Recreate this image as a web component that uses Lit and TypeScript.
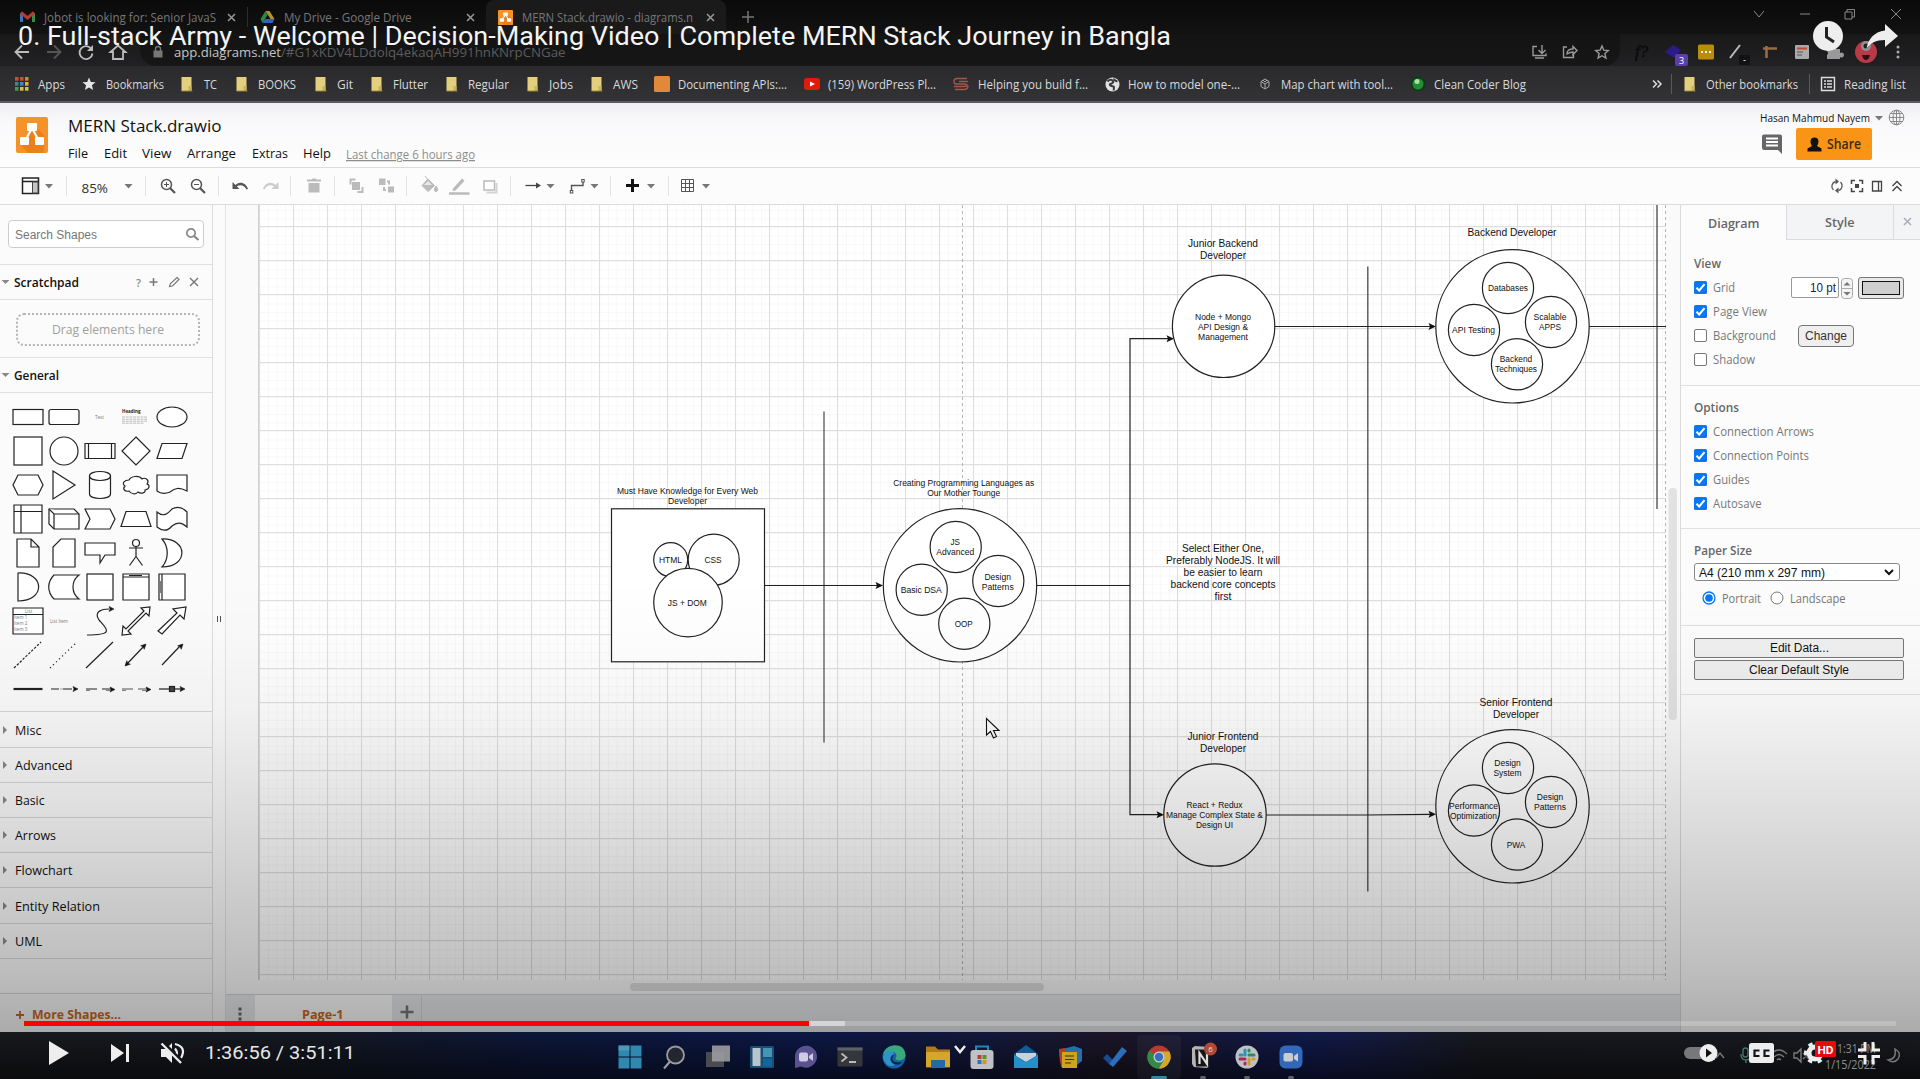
import { LitElement, html, svg, css } from "lit";
import { customElement } from "lit/decorators.js";

/** A single line of text set to a known advance width. */
const lab = (text: string, w: number, size = 13, cls = "") => html`<svg class="lab ${cls}" width=${w} height=${size * 2} font-size=${size}><text x="0" y=${size * 1.36} textLength=${w} lengthAdjust="spacingAndGlyphs">${text}</text></svg>`;

/** Inline drawing whose viewBox is its pixel size, centred on 0,0. */
const ic = (w: number, h: number, body: unknown, cls = "") => html`<svg class="ic ${cls}" width=${w} height=${h} viewBox="${-w / 2} ${-h / 2} ${w} ${h}">${body}</svg>`;

const caret = (x = 0, y = 0) => svg`<path d="M${x - 4} ${y - 2}h8l-4 4.5z" fill="#777" stroke="none"/>`;

const folder = ic(12, 16, svg`<path d="M-5.500-7h10v14h-10z" fill="#e3cf7d"/><path d="M4.500-7v14h-3v-5h3z" fill="#c9b35f"/><path d="M-5.500 7.200h11" stroke="#806a25"/>`);
const drawio = (w: number, h: number) => html`<svg class="ic" width=${w} height=${h} viewBox="0 0 32 36" preserveAspectRatio="none"><rect width="32" height="36" rx="2" fill="#f5922a"/><path d="M20 10l8 8v18H12l-7-8z" fill="#df6c0c" opacity=".45"/><path d="M16 11L9 24M16 11l7 13" stroke="#fff" stroke-width="2.200"/><rect x="11" y="6" width="10" height="8" rx="1" fill="#fff"/><rect x="4" y="20" width="9" height="8" rx="1" fill="#fff"/><rect x="19" y="20" width="9" height="8" rx="1" fill="#fff"/></svg>`;
const cross = (r: number, cls = "") => ic(r * 2 + 2, r * 2 + 2, svg`<path d="M${-r} ${-r}L${r} ${r}M${r} ${-r}L${-r} ${r}" stroke="currentColor" stroke-width="1.500"/>`, cls);

/* ---------- bookmarks ---------- */
type Mark = { icon: unknown; iw: number; text: string; tw: number; pitch: number };
const dots = ["#d5483c", "#d5483c", "#e07c3c", "#2f8f8a", "#4285c4", "#e0b13c", "#4a9a5a", "#d8c23c", "#d8c23c"];
const marks: Mark[] = [
  { icon: ic(16, 16, dots.map((c, i) => svg`<rect x=${-7 + (i % 3) * 5} y=${-7 + Math.floor(i / 3) * 5} width="3.500" height="3.700" fill=${c}/>`)), iw: 24, text: "Apps", tw: 27, pitch: 67.500 },
  { icon: ic(14, 14, svg`<path d="M0-6.500l1.800 4.500 4.700.3-3.600 3 1.200 4.700L0 3.400-4.100 6l1.200-4.700-3.600-3 4.700-.3z" fill="#e6e6e6"/>`), iw: 24, text: "Bookmarks", tw: 58, pitch: 99.500 },
  { icon: folder, iw: 23, text: "TC", tw: 13, pitch: 54.500 },
  { icon: folder, iw: 22.500, text: "BOOKS", tw: 38, pitch: 79 },
  { icon: folder, iw: 22, text: "Git", tw: 16, pitch: 56 },
  { icon: folder, iw: 22, text: "Flutter", tw: 35, pitch: 75.500 },
  { icon: folder, iw: 22, text: "Regular", tw: 41, pitch: 80.500 },
  { icon: folder, iw: 22, text: "Jobs", tw: 24, pitch: 64.500 },
  { icon: folder, iw: 22, text: "AWS", tw: 25, pitch: 63 },
  { icon: ic(16, 16, svg`<rect x="-8" y="-8" width="16" height="16" rx="1.500" fill="#e0893a"/>`), iw: 24, text: "Documenting APIs:...", tw: 109, pitch: 149.500 },
  { icon: ic(16, 16, svg`<rect x="-8" y="-6" width="16" height="12" rx="3" fill="#e01b0c"/><path d="M-2-2.500L3 0l-5 2.500z" fill="#fff"/>`), iw: 24.500, text: "(159) WordPress Pl...", tw: 108, pitch: 149.500 },
  { icon: ic(16, 16, svg`<path d="M6-5.500h-10q-3 0-3 3t3 2.500h9M7-2.500h-9M-7 2.500h10q3 0 3-2.500M-6 5.500h9q4 0 4-4" fill="none" stroke="#a3564a" stroke-width="1.400"/>`), iw: 24.500, text: "Helping you build f...", tw: 110, pitch: 151.500 },
  { icon: ic(15, 15, svg`<circle r="7" fill="#e2e2e2"/><path d="M-5-3q3-3 5-1t-1 3-1 2 3 1 0 4M2-6q-1 2 3 3" fill="none" stroke="#3a3a3d" stroke-width="2"/>`), iw: 23, text: "How to model one-...", tw: 112, pitch: 155.500 },
  { icon: ic(10, 12, svg`<path d="M0-5l4 2.500v5L0 5l-4-2.500v-5zM-4-2.500L0 0l4-2.500M0 0v5M-2-4l2 2 2-2" fill="none" stroke="#aaa"/>`), iw: 21, text: "Map chart with tool...", tw: 112, pitch: 149.500 },
  { icon: ic(16, 16, svg`<circle r="7.500" fill="#0d3d14"/><circle r="5.500" fill="#258c35"/><circle cx="-1" cy="-2.500" r="2.500" fill="#a5e3a0"/>`), iw: 24, text: "Clean Coder Blog", tw: 92, pitch: 120 },
];

/* ---------- shape palette ---------- */
const arrowHead = (x: number, y: number, a: number) => svg`<path transform="translate(${x} ${y}) rotate(${a})" d="M0 0l-5-2.500 1 2.500-1 2.500z" fill="#111" stroke-width=".6"/>`;
const shapes: unknown[] = [
  svg`<rect x="-15" y="-7.500" width="30" height="15"/>`,
  svg`<rect x="-15" y="-7.500" width="30" height="15" rx="2"/>`,
  svg`<text class="tiny" x="-5" y="2">Text</text>`,
  svg`<text class="tiny b" x="-14" y="-4">Heading</text><path d="M-14 0h25M-14 2.200h25M-14 4.200h25M-14 6.200h22" stroke="#aaa" stroke-dasharray="3 .7" stroke-width=".8"/>`,
  svg`<ellipse rx="15" ry="10"/>`,
  svg`<rect x="-14" y="-14" width="28" height="28"/>`,
  svg`<circle r="14"/>`,
  svg`<path d="M-15-7.500h30v15h-30zM-11.500-7.500v15M11.500-7.500v15"/>`,
  svg`<path d="M0-14L14 0 0 14-14 0z"/>`,
  svg`<path d="M-10-7.500h25l-5 15h-25z"/>`,
  svg`<path d="M-10-10h20l5 10-5 10h-20l-5-10z"/>`,
  svg`<path d="M-11-14L11 0-11 14z"/>`,
  svg`<path d="M-10.500-9v18c0 6 21 6 21 0v-18c0-6-21-6-21 0c0 6 21 6 21 0"/>`,
  svg`<path d="M-7-5c-4 0-8 3-4 6c-3 3 0 6 4 5c2 3 7 4 9 1c3 2 8 1 7-2c5-1 5-5 2-6c3-4-2-7-5-5c-3-4-11-3-13 1z"/>`,
  svg`<path d="M-15-10h30v16c-8-4-12-3-17 1c-5 2-9 2-13-1z"/>`,
  svg`<path d="M-14-14h28v28h-28zM-14-7.500h28M-7-14v28"/>`,
  svg`<path d="M-15-10h25l5 5v15h-25l-5-5z"/><path d="M-15-10l5 5h25M-10-5v15"/>`,
  svg`<path d="M-15-10h25l5 10-5 10h-25l5-10z"/>`,
  svg`<path d="M-10-7.500h20l5 15h-30z"/>`,
  svg`<path d="M-15-7c7 6 11 1 15-3c5-3 10-2 15 3v15c-6-5-10-5-15-1c-5 6-10 5-15 1z"/>`,
  svg`<path d="M-11-14h14l8 8v20h-22zM3-14v8h8"/>`,
  svg`<path d="M-3-14h14v28h-22v-20z"/>`,
  svg`<path d="M-15-10h30v12h-10l-5 8v-8h-15z"/>`,
  svg`<circle cy="-10" r="3.500"/><path d="M0-6.500v10M-7-5h14M0 3.500l-6.500 9M0 3.500l6.500 9"/>`,
  svg`<path d="M-10-14c26-1 27 28 0 28c7-8 7-20 0-28z"/>`,
  svg`<path d="M-10-14c27-1 28 28 0 28z"/>`,
  svg`<path d="M-10-12h25c-8 6-8 18 0 24h-25c-7-7-7-17 0-24z"/>`,
  svg`<rect x="-13" y="-13" width="26" height="26"/>`,
  svg`<path d="M-13-13h26v26h-26zM-13-10h26M-7-11.500h13"/>`,
  svg`<path d="M-13-13h26v26h-26zM-10-13v26" /><path d="M-11.500-6v12" stroke-width=".6"/>`,
  svg`<path d="M-15-13h30v26h-30zM-15-6.500h30"/><text class="tiny" x="-3" y="-8">List</text><text class="tiny" x="-14" y="-2">Item 1</text><text class="tiny" x="-14" y="4">Item 2</text><text class="tiny" x="-14" y="10">Item 3</text>`,
  svg`<text class="tiny" x="-14" y="2">List Item</text>`,
  svg`<path d="M-13 14c28 0 20-6 12-15c-6-9 4-11 10-11" fill="none"/>${arrowHead(14, -12, 0)}`,
  svg`<path d="M-14 14l1-9 3 3L8-10l-3-3 9-1-1 9-3-3L-8 10l3 3z"/>`,
  svg`<path d="M-14 10L5-8l-4-4 13-2-2 12-4-4L-10 13z"/>`,
  svg`<path d="M-14 13L13-13" stroke-dasharray="2.500 1.500"/>`,
  svg`<path d="M-14 13L13-13" stroke-dasharray="1.200 3"/>`,
  svg`<path d="M-14 13L13-13"/>`,
  svg`<path d="M-10 10L9-10"/>${arrowHead(10, -11, -45)}${arrowHead(-11, 11, 135)}`,
  svg`<path d="M-10 10L9-10"/>${arrowHead(11, -11, -45)}`,
  svg`<path d="M-14.500 0h29" stroke-width="2.200"/>`,
  svg`<path d="M-13 0h8M-1 0h9" /><path d="M-4 0h3" stroke="#bbb"/>${arrowHead(14, 0, 0)}`,
  svg`<path d="M-14 0h11M2 0h9"/><path d="M-14 1.500h4M6 1.500h4" stroke="#888"/>${arrowHead(15, .5, 0)}`,
  svg`<path d="M-14 0h11M2 0h9" stroke="#555"/><path d="M-14 1.500h4M6 1.500h4" stroke="#888"/>${arrowHead(15, .5, 0)}`,
  svg`<path d="M-13 0h22"/><rect x="-2.500" y="-2.500" width="5" height="5" fill="#444"/>${arrowHead(13, 0, 0)}`,
];

const sections: [string, number, number][] = [["Misc", 26.500, 36], ["Advanced", 57.500, 35], ["Basic", 29.500, 35], ["Arrows", 41, 35], ["Flowchart", 57.500, 35], ["Entity Relation", 85, 36], ["UML", 27, 35]];

/* ---------- diagram ---------- */
const ring = (x: number, y: number, r: number) => svg`<circle class="node" cx=${x} cy=${y} r=${r}/>`;
const txt = (x: number, y: number, lines: [string, number][], size = 8.500) => lines.map(([s, w], i) => svg`<text font-size=${size} x=${x - w / 2} y=${y + i * (size > 9 ? 12 : 10)} textLength=${w} lengthAdjust="spacingAndGlyphs">${s}</text>`);
const tip = (x: number, y: number) => svg`<path d="M${x} ${y}l-7.500-3.500 1.500 3.500-1.500 3.500z" fill="#111"/>`;

const diagram = svg`
  <defs>
    <pattern id="minor" x="259.500" y="227" width="8.500" height="8.500" patternUnits="userSpaceOnUse"><path d="M.5 0v8.500M0 .5h8.500" stroke="#f8f8f8" fill="none"/></pattern>
    <pattern id="major" x="259" y="226" width="34" height="34" patternUnits="userSpaceOnUse"><path d="M.5 0v34M0 .5h34" stroke="#dedede" fill="none"/></pattern>
  </defs>
  <rect x="258" y="205" width="1408" height="775" fill="#fff"/>
  <rect x="258" y="205" width="1408" height="775" fill="url(#minor)"/>
  <rect x="258" y="205" width="1408" height="775" fill="url(#major)"/>
  <path d="M258.500 205v775" stroke="#cfcfcf"/>
  <path d="M962.500 205v775M1665.500 205v775" stroke="#b4b4b4" stroke-dasharray="3 3"/>
  <g class="lines">
    <path d="M824 411.500V742.500" stroke="#555" stroke-width="1.300"/>
    <path d="M1367.800 266.500V891.500M1657 205V509" stroke="#555" stroke-width="1.400"/>
    <path d="M764 585.500h114M1036 585.500h94"/>
    <path d="M1168 338.700H1130V814.700H1158M1274 326.500h157M1266 815h100L1431 814.300M1589 326.500h77"/>
  </g>
  ${tip(883, 585.500)}${tip(1174, 338.700)}${tip(1164, 814.700)}${tip(1436, 326.500)}${tip(1436, 814.300)}
  <rect class="node" x="611.500" y="508.800" width="153" height="153"/>
  ${ring(670.700, 559.700, 17)}${ring(713.700, 559.700, 25.500)}${ring(688, 602.600, 34.300)}
  ${ring(960, 585.300, 76.700)}${ring(955.700, 547, 25.600)}${ring(998.300, 581, 25.600)}${ring(921.700, 589.700, 25.600)}${ring(964.300, 623.700, 25.600)}
  ${ring(1223.600, 326.300, 51.200)}${ring(1215, 815, 51.200)}
  ${ring(1512.500, 326.300, 76.700)}${ring(1508, 288, 25.600)}${ring(1551, 322, 25.600)}${ring(1474, 330, 25.600)}${ring(1517, 364.300, 25.600)}
  ${ring(1512.500, 806.300, 76.700)}${ring(1508, 768, 25.600)}${ring(1551, 802, 25.600)}${ring(1474, 810.500, 25.600)}${ring(1517, 844.500, 25.600)}
  <g class="words">
    ${txt(687.500, 494, [["Must Have Knowledge for Every Web", 141], ["Developer", 39]])}
    ${txt(670.500, 563, [["HTML", 23]])}${txt(713, 563, [["CSS", 17]])}${txt(687.300, 605.500, [["JS + DOM", 39]])}
    ${txt(963.700, 486, [["Creating Programming Languages as", 141], ["Our Mother Tounge", 73]])}
    ${txt(955.300, 545, [["JS", 9.500], ["Advanced", 38]])}${txt(997.700, 579.500, [["Design", 26.500], ["Patterns", 32]])}
    ${txt(921.300, 593, [["Basic DSA", 41]])}${txt(963.700, 627, [["OOP", 18]])}
    ${txt(1223, 247, [["Junior Backend", 70], ["Developer", 46]], 10.200)}
    ${txt(1223, 319.500, [["Node + Mongo", 56], ["API Design &", 50], ["Management", 50]])}
    ${txt(1512, 236, [["Backend Developer", 89]], 10.200)}
    ${txt(1508, 291.300, [["Databases", 40]])}${txt(1550, 320.300, [["Scalable", 33], ["APPS", 22]])}
    ${txt(1473.500, 333.300, [["API Testing", 43]])}${txt(1516, 362.300, [["Backend", 32.500], ["Techniques", 42]])}
    ${txt(1223, 552, [["Select Either One,", 82], ["Preferably NodeJS. It will", 114], ["be easier to learn", 79], ["backend core concepts", 105], ["first", 17]], 10.200)}
    ${txt(1223, 740, [["Junior Frontend", 71], ["Developer", 46]], 10.200)}
    ${txt(1214.500, 808, [["React + Redux", 56], ["Manage Complex State &", 97], ["Design UI", 37]])}
    ${txt(1516, 706, [["Senior Frontend", 73], ["Developer", 46]], 10.200)}
    ${txt(1507.500, 766.300, [["Design", 26.500], ["System", 28]])}${txt(1550, 800.300, [["Design", 26.500], ["Patterns", 32]])}
    ${txt(1473.500, 809.300, [["Performance", 49], ["Optimization", 47]])}${txt(1516, 848, [["PWA", 18.500]])}
  </g>
  <rect x="1668.500" y="488" width="8.500" height="232" rx="4" fill="#e2e2e2"/>
  <path d="M986.500 718.500v16.500l4-3.500 3 6.500 3-1.500-3-6h5.500z" fill="#fff" stroke="#111" stroke-width="1.100"/>
`;

/* ---------- toolbar groups: [left, right, drawing] ---------- */
const Y = 187;
const groups: [number, number, unknown][] = [
  [0, 66.500, svg`<path d="M22.500 179h16v15.500h-16zM22.500 182.500h16" fill="none" stroke="#222" stroke-width="1.500"/><rect x="32.500" y="183" width="5.500" height="11" fill="#c4c4c4" stroke="#444"/>${caret(49, Y)}`],
  [66.500, 146, svg`<text x="81" y="194" font-size="13" textLength="26.500" lengthAdjust="spacingAndGlyphs" fill="#333">85%</text>${caret(128, Y)}`],
  [146, 219, svg`<g fill="none" stroke="#555"><circle cx="166.500" cy="185.500" r="5" stroke-width="1.500"/><path d="M170 189l5 5" stroke-width="2.200"/><path d="M164 185.500h5M166.500 183v5"/><circle cx="196.500" cy="185.500" r="5" stroke-width="1.500"/><path d="M200 189l5 5" stroke-width="2.200"/><path d="M194 185.500h5"/></g>`],
  [219, 291, svg`<path d="M232.500 183v7h7l-2.700-2.700c4-2.500 8-.6 9.700 3.200l1.500-.6c-2-6-8-8-12.500-4z" fill="#555"/><path d="M278.500 183v7h-7l2.700-2.700c-4-2.500-8-.6-9.700 3.200l-1.500-.6c2-6 8-8 12.500-4z" fill="#ccc"/>`],
  [291, 335, svg`<path d="M308.500 184h11v9.500h-11zM307 180.500h4.500l1-1h3l1 1h4.500v2h-14z" fill="#bbb"/>`],
  [335, 407, svg`<g fill="#bbb"><path d="M352 183h8v8h-8z"/><path d="M349.500 179.500h6v2h-4v4h-2zM363.500 194h-6v-2h4v-4h2z"/><path d="M379 179.500h6.500v6.500h-6.500zM388 187.500h6v6h-6z"/><path d="M387 181.500h3v4h-2v-2h-1zM386 192h-3v-4h2v2h1z"/></g>`],
  [407, 510.500, svg`<path d="M428 180l6.500 6.500-6.500 6-6-6zM436 187q3.500 5 0 5.500-3.500-.5 0-5.500zM425 177l3 4" fill="#bbb" stroke="#bbb"/><path d="M424 186h8l-4-4z" fill="#e9e9e9"/><path d="M453 189.500l9-10 2.500 2.200-9 9.800-3 .5z" fill="#bbb"/><path d="M449 194.500h20.500" stroke="#bbb" stroke-width="2.500"/><rect x="484" y="182" width="10.500" height="9" fill="#fff" stroke="#bbb" stroke-width="1.500"/><path d="M496.500 184v9.500h-10" stroke="#d4d4d4" stroke-width="2" fill="none"/>`],
  [510.500, 611, svg`<path d="M525 186.500h12" stroke="#444" stroke-width="1.300"/><path d="M540.500 186.500l-5-3v6z" fill="#444"/>${caret(550, Y)}<path d="M571 193v-6.500h11.500v-4" stroke="#555" fill="none" stroke-width="1.400"/><rect x="569.800" y="191.500" width="2.500" height="2.500" fill="#fff" stroke="#555"/><rect x="581.200" y="180.500" width="2.500" height="2.500" fill="#fff" stroke="#555"/>${caret(594, Y)}`],
  [611, 669, svg`<path d="M626 186.500h13M632.500 180v13" stroke="#111" stroke-width="3"/>${caret(651, Y)}`],
  [669, 730, svg`<path d="M681.500 180.500h12v12h-12zM685.500 180.500v12M689.500 180.500v12M681.500 184.500h12M681.500 188.500h12" stroke="#555" fill="none"/>${caret(706, Y)}`],
];

/* ---------- taskbar ---------- */
const apps: unknown[] = [
  svg`<path d="M-11.500-11.500h11v11h-11zM.5-11.500h11v11H.5zM-11.500.5h11v11h-11zM.5.5h11v11H.5z" fill="#2f88ae"/><path d="M-11.500-11.500h11v5h-11z" fill="#64a3c4" opacity=".6"/>`,
  svg`<circle cx="1.500" cy="-2" r="8.500" fill="#23262f" stroke="#9a9ca3" stroke-width="1.800"/><path d="M-4 4.500l-6 7" stroke="#9a9ca3" stroke-width="2.200"/>`,
  svg`<path d="M-12-5h18v15h-18z" fill="#4a4b50"/><path d="M-6-11.500h18v16h-18z" fill="#9b9ca0" opacity=".9"/>`,
  svg`<rect x="-12" y="-11" width="24" height="22" rx="1.500" fill="#174f75"/><path d="M-9.500-9h8v18h-8z" fill="#b9c4cc"/><path d="M1-9h9v9H1z" fill="#4795b5"/><path d="M1 1.500h9v8H1z" fill="#15659c"/>`,
  svg`<path d="M-11 11v-11a11 11 0 1 1 6 9.500z" fill="#5a5290"/><rect x="-7" y="-4.500" width="9" height="9" rx="2" fill="#cfcbe0"/><path d="M3-1l4-3v8L3 1z" fill="#cfcbe0"/>`,
  svg`<rect x="-12.500" y="-9.500" width="25" height="19" rx="1" fill="#34363b"/><path d="M-12.500-9.500h25v3h-25z" fill="#5f6168"/><path d="M-8.500-3.500l5 4-5 4M-1 5h7" stroke="#bbb" fill="none" stroke-width="1.800"/>`,
  svg`<circle r="11.500" fill="#1560a5"/><path d="M-11-2c2-12 22-14 22.500 0 0 5-7 7-10 4 4-6-5-11-12.500-4z" fill="#3aa77d"/><path d="M-11-1c4-7 10-6 11-2-5 1-5 8 1 11-6 3-12-2-12-9z" fill="#2d93c9"/><path d="M0-2c-4 4-1 9 8 7-3 4-9 3-11-1-1-3 1-6 3-6z" fill="#0b2440"/>`,
  svg`<path d="M-12-10.500h9l3 3h12v18h-24z" fill="#b07b18"/><path d="M-12-5h24v15h-24z" fill="#d7a42c"/><path d="M-7 3h14v8H-7z" fill="#2568a8"/>`,
  svg`<path d="M-6-6v-4.500h12v4.500" fill="none" stroke="#2584bd" stroke-width="2"/><rect x="-11.500" y="-7" width="23" height="19" rx="3" fill="#c0c1c4"/><path d="M-4.500-2h4v4h-4z" fill="#b5432c"/><path d="M.5-2h4v4h-4z" fill="#5f9329"/><path d="M-4.500 3h4v4h-4z" fill="#2879b5"/><path d="M.5 3h4v4h-4z" fill="#cd9722"/>`,
  svg`<path d="M-12-3L0-12 12-3v14h-24z" fill="#125b96"/><path d="M-10-4h20v3L0 5l-10-6z" fill="#c8d2d9"/><path d="M-12-2L0 5l12-7v13h-24z" fill="#258fc9"/>`,
  svg`<path d="M-11-7l15-4 8 3v12l-8 6H-9z" fill="#2270ad"/><path d="M-11-8l6-1v14l-5 1z" fill="#b23c31"/><path d="M-8-5h15v16h-15z" fill="#cda51c"/><path d="M-5-1h9M-5 2.500h9M-5 6h6" stroke="#3d3208" stroke-width="1.200"/>`,
  svg`<path d="M-12 1l4-4 6 6-4 4z" fill="#194b8c"/><path d="M-6 7L7-10l5 4L-2 10z" fill="#2c6ebb"/>`,
  svg`<circle r="11.500" fill="#b93a30"/><path d="M0 0L-10-6A11.500 11.500 0 0 0 0 11.500L6 3z" fill="#2f8b45"/><path d="M0 0h11.500A11.500 11.500 0 0 1 0 11.500L5 3z" fill="#d2a92b"/><path d="M0-5.500h10.500a11.500 11.500 0 0 1 0 10L0 11.500l5-8z" fill="#d2a92b"/><circle r="5.500" fill="#c9cdd4"/><circle r="4.200" fill="#376fc0"/>`,
  svg`<path d="M-11-9l3-2 15 1v18l-3 3-13-1-2-3z" fill="#b4b4b4"/><path d="M-8-7.500h15v17H-7z" fill="#161616"/><path d="M-3.500 7V-4L4 7V-4" stroke="#ddd" stroke-width="2.200" fill="none"/><circle cx="7.500" cy="-8" r="6.500" fill="#b04a38"/><text x="5.300" y="-5" font-size="8" fill="#ddd">6</text>`,
  svg`<circle r="11.500" fill="#bfc1c4"/><g stroke-width="3" stroke-linecap="round"><path d="M-2-7v5M-7-2h2" stroke="#2a94b8"/><path d="M2-2h5M2-7v1" stroke="#2c8a63"/><path d="M2 2v5M6 2h1" stroke="#cf9b2a"/><path d="M-7 2h5M-2 6v1" stroke="#b32450"/></g>`,
  svg`<rect x="-11.500" y="-11.500" width="23" height="23" rx="6" fill="#3268b9"/><rect x="-7.500" y="-4" width="9.500" height="8.500" rx="2" fill="#c9cdd2"/><path d="M3-1l4-3v8.500L3 2z" fill="#c9cdd2"/>`,
];

@customElement("app-root")
export class AppRoot extends LitElement {
  static styles = css`
    :host { display: block; position: relative; width: 1920px; height: 1079px; overflow: hidden; background: #fff; font-family: "Open Sans", "Noto Sans", sans-serif; }
    * { box-sizing: border-box; }
    svg { display: block; flex: none; overflow: visible; }
    .lab { fill: currentColor; }
    .b { font-weight: 700; } .sb { font-weight: 600; }
    .arial { font-family: "Liberation Sans", sans-serif; }
    .page { display: flex; flex-direction: column; height: 1079px; }
    .page > * { flex: none; }
    .grow { flex: 1; }

    .strip { height: 34px; background: linear-gradient(#0a0a0a, #121213); color: #777; display: flex; align-items: center; }
    .tab { display: flex; align-items: center; height: 34px; }
    .tab.one { width: 248px; padding-left: 20px; gap: 9px; border-right: 1px solid #2d2d2e; height: 20px; }
    .tab.two { width: 238px; padding-left: 12px; gap: 9px; }
    .tab.three { width: 240px; padding-left: 12px; gap: 9px; background: #1a1a1b; border-radius: 8px 8px 0 0; }
    .tab .close { margin-left: auto; margin-right: 11px; color: #999; }
    .plus { margin-left: 15px; }
    .win { margin-left: auto; margin-right: 19px; margin-top: -6px; }
    .nav { height: 32px; background: linear-gradient(#19191a, #212123); display: flex; align-items: center; padding-left: 13px; color: #aaa; }
    .nav .buttons { width: 127px; display: flex; gap: 14px; padding-top: 4px; }
    .pill { width: 1480px; height: 32px; border-radius: 0 0 16px 16px; background: linear-gradient(#141414, #161617); display: flex; align-items: center; padding: 4px 10px 0 13px; color: #5c5c5d; }
    .pill .host { color: #c4c4c4; margin-left: 11px; }
    .exts { display: flex; gap: 8px; margin-left: 10px; padding-top: 4px; }
    .marks { height: 37px; background: linear-gradient(#2a2a2d, #333336); border-bottom: 2px solid #5b5b60; color: #d9d9da; display: flex; align-items: center; padding: 1px 0 0 14px; }
    .mark { display: flex; align-items: center; flex: none; }
    .mark .slot { flex: none; }
    .vr { width: 1px; height: 20px; background: #5b5b5e; }
    .rightmarks { display: flex; align-items: center; margin-left: auto; margin-right: 14px; }

    .head { height: 65px; background: linear-gradient(#efeff4, #f9f9fb 30%, #fdfdfd); border-bottom: 1px solid #dcdcdc; display: flex; padding-left: 16px; color: #111; }
    .logo { margin-top: 14px; }
    .titles { margin-left: 20px; }
    .title { margin-top: 5.500px; height: 38px; }
    .menu { display: flex; gap: 15.500px; margin-top: -6.500px; align-items: center; }
    .menu .last { color: #8d8d8d; text-decoration: underline; margin-top: 2px; margin-left: -1px; }
    .user { margin-left: auto; width: 162px; padding-top: 4px; }
    .user .name { display: flex; align-items: center; height: 21px; gap: 5px; margin-left: 1.500px; }
    .user .acts { display: flex; align-items: center; margin-left: 4px; }
    .share { width: 76px; height: 32px; margin-left: 14px; border-radius: 2px; background: #f99417; color: #3a2b10; display: flex; align-items: center; padding-left: 10px; gap: 4px; }
    .tools { height: 37px; background: #fcfcfc; border-bottom: 1px solid #dcdcdc; display: flex; align-items: center; }
    .tools .grp { border-right: 1px solid #e3e3e3; height: 20px; display: flex; align-items: center; flex: none; }
    .tools .grp:nth-child(10) { border: 0; }
    .tools .end { margin-left: auto; margin-right: 14px; display: flex; gap: 2px; }

    .body { height: 827px; display: flex; background: #fbfbfb; }
    .side { width: 213px; border-right: 1px solid #dcdcdc; color: #111; display: flex; flex-direction: column; }
    .search { margin: 15px 8px 16px; height: 28px; width: 196px; border: 1px solid #ccc; border-radius: 4px; background: #fff; display: flex; align-items: center; justify-content: space-between; padding: 0 3px 0 6px; color: #777; flex: none; }
    .bar { display: flex; align-items: center; border-top: 1px solid #e0e0e0; padding-left: 1px; gap: 4px; flex: none; }
    .scratch { height: 35px; } .general { height: 35px; }
    .mini { display: flex; margin-left: auto; color: #888; align-items: center; margin-right: 10px; }
    .drop { border-top: 1px solid #e0e0e0; height: 58px; display: flex; justify-content: center; padding: 12.500px 0 0 3px; color: #a0a0a0; flex: none; }
    .drop > div { width: 184px; height: 33px; border: 2px dotted #b5b5b5; border-radius: 8px; display: flex; align-items: center; justify-content: center; }
    .shapes { border-top: 1px solid #e0e0e0; height: 319px; padding: 6.500px 0 0 10px; display: grid; grid-template-columns: repeat(5, 36px); grid-auto-rows: 34px; flex: none; }
    .shapes svg { fill: #fff; stroke: #222; stroke-width: 1.200; }
    .tiny { font-size: 4.500px; fill: #777; stroke: none; }
    .tiny.b { fill: #222; }
    .section { border-top: 1px solid #d8d8d8; display: flex; align-items: center; gap: 7.500px; padding-left: 3px; flex: none; }
    .void { border-top: 1px solid #d8d8d8; height: 35px; flex: none; }
    .more { border-top: 1px solid #d8d8d8; height: 38px; color: #c9671f; display: flex; align-items: center; padding: 4px 0 0 15px; gap: 7px; }
    .split { width: 13px; border-right: 1px solid #e3e3e3; display: flex; align-items: center; justify-content: center; }
    .main { width: 1453.500px; display: flex; flex-direction: column; background: #fafafa; }
    .canvas { height: 775px; overflow: hidden; flex: none; }
    .node { fill: #fff; stroke: #222; stroke-width: 1.200; }
    .lines { fill: none; stroke: #222; stroke-width: 1.200; }
    .words { font-family: "Liberation Sans", sans-serif; fill: #111; }
    .hbar { height: 14px; padding: 3px 0 0 404px; }
    .hbar div { width: 414px; height: 8px; border-radius: 4px; background: #dedede; }
    .foot { flex: 1; background: #e8eaed; border-top: 1px solid #d0d4d6; display: flex; color: #c9671f; }
    .foot .dots { width: 29px; padding: 10px 0 0 9px; }
    .foot .pg { width: 137px; background: #fff; padding: 7px 0 0 46.500px; }
    .foot .add { width: 30px; border-right: 1px solid #d4d7da; padding: 9px 0 0 7px; }

    .panel { width: 240.500px; border-left: 1px solid #dadada; color: #777; background: #fcfcfc; }
    .ptabs { display: flex; height: 35px; color: #666; }
    .ptabs > div { display: flex; align-items: center; justify-content: center; }
    .ptabs .a { width: 106px; padding-top: 1px; }
    .ptabs .s { width: 108px; background: #f3f4f6; border: 1px solid #dadce0; border-top: 0; }
    .ptabs .x { width: 26px; background: #f3f4f6; border-bottom: 1px solid #dadce0; color: #aab; padding-bottom: 2px; }
    .sec { border-bottom: 1px solid #e0e0e0; padding-left: 13.500px; }
    .sec h4 { margin: 0; height: 24px; display: flex; align-items: center; color: #666; }
    .view { height: 146px; padding-top: 11.500px; }
    .opts { height: 143px; padding-top: 9px; }
    .paper { height: 97px; padding-top: 9px; }
    .btns { height: 69px; padding-top: 12px; display: flex; flex-direction: column; gap: 2.500px; }
    .opt { height: 24px; display: flex; align-items: center; gap: 6px; }
    .paper .opt { padding-left: 8px; height: 30px; margin-top: 2px; }
    .paper .land { margin-left: 3px; }
    .opt .ctl { margin-left: auto; display: flex; gap: 3px; margin-right: 16px; color: #224; align-items: center; }
    .num { width: 48px; height: 21px; border: 1px solid #999; border-radius: 2px; background: #fff; display: flex; align-items: center; justify-content: flex-end; padding-right: 2px; margin-right: -3px; }
    .sw { width: 46px; height: 22px; border: 1.500px solid #777; border-radius: 3px; background: #e8e8e8; padding: 3px; }
    .sw div { height: 100%; background: #cfcfcf; border: 1.500px solid #111; }
    .change { width: 56px; height: 22px; border: 1.500px solid #777; border-radius: 4px; background: #efefef; display: flex; align-items: center; justify-content: center; margin-right: 50px; color: #333; }
    .select { width: 206px; height: 18px; border: 1px solid #888; border-radius: 3px; background: #fff; display: flex; align-items: center; justify-content: space-between; padding: 0 4px 0 4px; color: #111; margin-top: 1px; }
    .btn { width: 210px; height: 19.500px; border: 1.200px solid #777; border-radius: 2px; background: #efefef; color: #111; display: flex; align-items: center; justify-content: center; }

    .task { height: 47px; background: linear-gradient(rgba(0,0,0,0), rgba(0,0,0,.55)), linear-gradient(90deg, #18191d 0, #141820 16%, #0c1638 28%, #0d1845 42%, #14183a 52%, #1c1628 58%, #10194a 68%, #141a40 71%, #17181e 77%, #191a1f); display: flex; align-items: center; padding: 2px 0 0 608px; }
    .app { width: 44.060px; height: 44px; display: flex; align-items: center; justify-content: center; position: relative; }
    .app::after { content: ""; position: absolute; bottom: 0; left: 19px; width: 6px; height: 3px; border-radius: 2px; }
    .app.run::after { background: #5d6065; }
    .app.cur { background: rgba(255,255,255,.04); border-radius: 4px; }
    .app.cur::after { background: #3d82a0; width: 16px; left: 14px; }

    .shade { position: absolute; left: 0; right: 0; top: 205px; height: 827px; background: linear-gradient(rgba(0,0,0,0) 45%, rgba(0,0,0,.01) 53%, rgba(0,0,0,.04) 61%, rgba(0,0,0,.1) 71%, rgba(0,0,0,.175) 82%, rgba(0,0,0,.25) 93%, rgba(0,0,0,.32)); }
    .vtitle { position: absolute; left: 18px; top: 9.500px; color: #f4f4f4; font-family: Roboto, sans-serif; }
    .vtop { position: absolute; right: 22px; top: 20px; display: flex; gap: 22px; align-items: center; }
    .track { position: absolute; left: 24px; top: 1021px; width: 1872px; height: 5px; background: rgba(255,255,255,.2); display: flex; }
    .played { width: 785px; background: #f00; }
    .loaded { width: 36px; background: rgba(255,255,255,.45); }
    .ctrls { position: absolute; left: 48px; top: 1032px; height: 42px; display: flex; align-items: center; color: #e6e6e6; font-family: Roboto, sans-serif; }
    .ctrls .n { margin-left: 41px; } .ctrls .m { margin-left: 31px; } .ctrls .t { margin: -2px 0 0 21px; }
    .chev { position: absolute; left: 952px; top: 1043px; }
    .tray { position: absolute; left: 1680px; top: 1032px; }
  `;

  private check(on: boolean) {
    return on
      ? ic(13, 13, svg`<rect x="-6.500" y="-6.500" width="13" height="13" rx="1.500" fill="#0b75f5"/><path d="M-4 .3l2.700 2.700L4-3.300" fill="none" stroke="#fff" stroke-width="2"/>`)
      : ic(13, 13, svg`<rect x="-6" y="-6" width="12" height="12" rx="1.500" fill="#fff" stroke="#777"/>`);
  }

  private opt(on: boolean, text: string, w: number, extra: unknown = "") {
    return html`<div class="opt">${this.check(on)}${lab(text, w, 12.500)}${extra}</div>`;
  }

  private chrome() {
    return html`
      <div class="strip">
        <div class="tab one">
          ${ic(15, 12, svg`<path d="M-6 5v-9" stroke="#3d72b8" stroke-width="3"/><path d="M6 5v-9" stroke="#3a8a4c" stroke-width="3"/><path d="M-6.500-4.500L0 1l6.500-5.500" fill="none" stroke="#b63a30" stroke-width="3"/>`)}
          ${lab("Jobot is looking for: Senior JavaS", 172, 13)}${cross(3.500, "close")}
        </div>
        <div class="tab two">
          ${ic(15, 14, svg`<path d="M-2-6h4l5 8H3z" fill="#b8912b"/><path d="M-2-6l2 4-5 8-2-4z" fill="#2c8748"/><path d="M-5 6l2.500-4H7L5 6z" fill="#2f63b5"/>`)}
          ${lab("My Drive - Google Drive", 127.500, 13)}${cross(3.500, "close")}
        </div>
        <div class="tab three">${drawio(15, 15)}${lab("MERN Stack.drawio - diagrams.n", 171, 13)}${cross(3.500, "close")}</div>
        <div class="plus">${ic(14, 14, svg`<path d="M-6 0H6M0-6V6" stroke="#777" stroke-width="1.500"/>`)}</div>
        <div class="win">${ic(152, 14, svg`<g fill="none" stroke="#888"><path d="M-71-3l5 6 5-6M-25 0h10M20-2h7v7h-7zM22-2v-2.500h7.500v7.500H27M66-5l10 10M76-5L66 5"/></g>`)}</div>
      </div>
      <div class="nav">
        <div class="buttons">
          ${ic(18, 18, svg`<path d="M7 0H-6M0-6.500L-6.500 0 0 6.500" fill="none" stroke="#bbb" stroke-width="1.800"/>`)}
          ${ic(18, 18, svg`<path d="M-7 0H6M0-6.500L6.500 0 0 6.500" fill="none" stroke="#555" stroke-width="1.800"/>`)}
          ${ic(18, 18, svg`<path d="M5.500-3a6.500 6.500 0 1 0 1 4.500" fill="none" stroke="#bbb" stroke-width="1.800"/><path d="M7-7v6H1z" fill="#bbb"/>`)}
          ${ic(18, 18, svg`<path d="M-7.500 0L0-6.500 7.500 0H5v7H-5V0z" fill="none" stroke="#bbb" stroke-width="1.800"/>`)}
        </div>
        <div class="pill">
          ${ic(10, 12, svg`<path d="M-4.500-1.500h9v7h-9z" fill="#777"/><path d="M-2.500-1v-2a2.500 2.500 0 0 1 5 0v2" fill="none" stroke="#777" stroke-width="1.300"/>`)}
          <span class="host">${lab("app.diagrams.net", 107, 13.500)}</span>${lab("/#G1xKDV4LDdolq4ekaqAH991hnKNrpCNGae", 284.500, 13.500)}
          <span class="grow"></span>
          ${ic(80, 16, svg`<g fill="none" stroke="#9a9a9a" stroke-width="1.400"><path d="M-33-5.500h-4v9h13v-2M-35 6h9M-28-7v8M-31.500-2l3.500 3.500 3.500-3.500"/><path d="M-3-5h-3.500v10.500h10v-3M-3 2q0-5 6-5v-2.500l4 4-4 4V0Q0 0-3 2z"/><path d="M32-6l1.800 4.200 4.500.4-3.400 3 1 4.500L32 3.700 28.100 6l1-4.500-3.400-3 4.500-.4z"/></g>`)}
        </div>
        <div class="exts">
          ${ic(24, 22, svg`<text x="-7" y="5" font-family="Liberation Serif" font-style="italic" font-size="17" fill="#0a0a0a" stroke="#0a0a0a" stroke-width=".4">f?</text>`)}
          ${ic(24, 22, svg`<path d="M-1-7l8 5-7 8-9-6z" fill="#2d1a8a"/><rect x="1" y="2" width="13" height="12" rx="2" fill="#5a3fa8"/><text x="5" y="11.500" font-size="9" fill="#fff">3</text>`)}
          ${ic(24, 22, svg`<rect x="-8" y="-7.500" width="16" height="15" rx="1.500" fill="#b98d08"/><path d="M-5 0h2M-1 0h2M3 0h2" stroke="#eee" stroke-width="1.800"/>`)}
          ${ic(24, 22, svg`<path d="M-8 6L2-7" stroke="#bbb" stroke-width="2"/><rect x="1" y="3" width="11" height="10" rx="1" fill="#121212"/><path d="M5.500 8.500h2" stroke="#ddd"/>`)}
          ${ic(24, 22, svg`<path d="M-7-3.500h14M-3.500-6v12" stroke="#9a6b44" stroke-width="2.600"/>`)}
          ${ic(24, 22, svg`<rect x="-7" y="-7" width="14" height="14" rx="1" fill="#aaa"/><path d="M-5-3.500H5" stroke="#c34a33" stroke-width="2"/><path d="M-5 0h6M-5 3h5" stroke="#555"/>`)}
          ${ic(24, 22, svg`<path d="M-7-3h4a2.500 2.500 0 1 1 5 0h4v4a2.500 2.500 0 1 1 0 4v2H-7V3a2.500 2.500 0 0 0 0-4z" fill="#999"/>`)}
          ${ic(24, 22, svg`<circle r="11" fill="#b93a47"/><circle cy="-6" r="5" fill="#8d9498"/><circle cy="-6" r="2.500" fill="#222"/><path d="M-4 3h8q-1 5-4 5t-4-5z" fill="#2c1114"/>`)}
          ${ic(24, 22, svg`<g fill="#aaa"><circle cy="-5" r="1.500"/><circle r="1.500"/><circle cy="5" r="1.500"/></g>`)}
        </div>
      </div>
      <div class="marks">
        ${marks.map((m) => html`<div class="mark" style="width:${m.pitch}px"><div class="slot" style="width:${m.iw}px">${m.icon}</div>${lab(m.text, m.tw, 12.500)}</div>`)}
        <div class="rightmarks">
          ${ic(10, 10, svg`<path d="M-4-3.500L-.5 0-4 3.500M.5-3.500L4 0 .5 3.500" fill="none" stroke="#ddd" stroke-width="1.500"/>`)}
          <span class="vr" style="margin:0 12px 0 9px"></span>${folder}<span style="width:10px"></span>${lab("Other bookmarks", 92, 12.500)}
          <span class="vr" style="margin:0 11px"></span>
          ${ic(14, 14, svg`<path d="M-6.500-6.500h13v13h-13z" fill="none" stroke="#ddd" stroke-width="1.400"/><path d="M-4-3h2M-1-3h5M-4 0h2M-1 0h5M-4 3h2M-1 3h5" stroke="#ddd" stroke-width="1.400"/>`)}
          <span style="width:9px"></span>${lab("Reading list", 62, 12.500)}
        </div>
      </div>`;
  }

  private header() {
    return html`
      <div class="head">
        <div class="logo">${drawio(32, 36)}</div>
        <div class="titles">
          <div class="title">${lab("MERN Stack.drawio", 153.500, 17)}</div>
          <div class="menu">
            ${lab("File", 20, 13.500)}${lab("Edit", 23, 13.500)}${lab("View", 29.500, 13.500)}${lab("Arrange", 49, 13.500)}${lab("Extras", 36, 13.500)}${lab("Help", 28, 13.500)}
            ${lab("Last change 6 hours ago", 129, 12.500, "last")}
          </div>
        </div>
        <div class="user">
          <div class="name">${lab("Hasan Mahmud Nayem", 110, 11.500)}${ic(8, 6, caret())}${ic(17, 17, svg`<g fill="none" stroke="#888"><circle r="7.300"/><ellipse rx="3.500" ry="7.300"/><path d="M0-7.300v14.600M-7.300 0H7.300M-6-4H6M-6 4H6"/></g>`)}</div>
          <div class="acts">
            ${ic(20, 20, svg`<path d="M-8-9.500H8a2 2 0 0 1 2 2V10L6 6H-8a2 2 0 0 1-2-2v-11.500a2 2 0 0 1 2-2z" fill="#666"/><path d="M-6-5.500H6M-6-2H6M-6 1.500H6" stroke="#fff" stroke-width="1.800"/>`)}
            <div class="share">${ic(17, 17, svg`<path d="M-2.500 1.500C-5-2-4.500-7 0-7s5 5 2.500 8.500L7 4v3H-7V4z" fill="#111"/>`)}${lab("Share", 34, 13.500, "sb")}</div>
          </div>
        </div>
      </div>
      <div class="tools">
        ${groups.map(([a, b, g]) => html`<div class="grp" style="width:${b - a}px"><svg width=${b - a - 1} height="38" viewBox="${a} 168 ${b - a - 1} 38">${g}</svg></div>`)}
        <div class="end">
          ${ic(18, 18, svg`<path d="M-1.500-4.500a5 5 0 0 0-2 8.500M1.500 4.500a5 5 0 0 0 2-8.500" fill="none" stroke="#555" stroke-width="1.300"/><path d="M-1.500-7.500l3.500 3-3.500 3zM1.500 1.500v6l-3.500-3z" fill="#555"/>`)}
          ${ic(18, 18, svg`<path d="M-5.500-2v-3.500h3.500M2-5.500h3.500V-2M5.500 2v3.500H2M-2 5.500h-3.500V2" fill="none" stroke="#444" stroke-width="1.500"/><path d="M-2-2h4v4h-4z" fill="#444"/>`)}
          ${ic(18, 18, svg`<path d="M-4.500-4.500h9v9.500h-9zM1.500-4.500v9.500" fill="none" stroke="#444" stroke-width="1.300"/>`)}
          ${ic(18, 18, svg`<path d="M-4.500 0L0-4.500 4.500 0M-4.500 5L0 .5 4.500 5" fill="none" stroke="#444" stroke-width="1.400"/>`)}
        </div>
      </div>`;
  }

  private sidebar() {
    const open = ic(9, 8, svg`<path d="M-4-2h8L0 2z" fill="#888"/>`);
    return html`
      <div class="side">
        <div class="search">${lab("Search Shapes", 82, 12.500, "arial")}${ic(16, 16, svg`<circle cx="-1" cy="-1" r="4.200" fill="none" stroke="#888" stroke-width="1.700"/><path d="M2 2l4.500 4" stroke="#888" stroke-width="2.300"/>`)}</div>
        <div class="bar scratch">${open}${lab("Scratchpad", 65, 13, "sb")}
          <div class="mini">${lab("?", 5, 11.500, "sb")}${ic(25, 16, svg`<path d="M-4 0H4M0-4V4" stroke="#777" stroke-width="1.500"/>`)}${ic(16, 16, svg`<path d="M-4.500 4.500l1-3L3-4.500l2 2L-1.500 4z" fill="none" stroke="#777" stroke-width="1.200"/>`)}<span style="width:4px"></span>${ic(16, 16, svg`<path d="M-4-4L4 4M4-4L-4 4" stroke="#777" stroke-width="1.400"/>`)}</div>
        </div>
        <div class="drop"><div>${lab("Drag elements here", 112, 13)}</div></div>
        <div class="bar general">${open}${lab("General", 45, 13, "sb")}</div>
        <div class="shapes">${shapes.map((s) => ic(36, 34, s))}</div>
        ${sections.map(([n, w, h]) => html`<div class="section" style="height:${h}px">${ic(4, 8, svg`<path d="M-2-4L2 0-2 4z" fill="#888"/>`)}${lab(n, w, 13)}</div>`)}
        <div class="void"></div>
        <div class="more">${ic(10, 10, svg`<path d="M-4 0H4M0-4V4" stroke="#c9671f" stroke-width="1.800"/>`)}${lab("More Shapes...", 89, 12.500, "b")}</div>
      </div>`;
  }

  private panel() {
    return html`
      <div class="panel">
        <div class="ptabs"><div class="a">${lab("Diagram", 51.500, 13, "sb")}</div><div class="s">${lab("Style", 29.500, 13, "sb")}</div><div class="x">${cross(3.500)}</div></div>
        <div class="sec view">
          <h4>${lab("View", 27, 12.500, "sb")}</h4>
          ${this.opt(true, "Grid", 22, html`<div class="ctl"><div class="num">${lab("10 pt", 26, 12.500, "arial")}</div>${ic(16, 22, svg`<rect x="-5.500" y="-9.500" width="11" height="20" rx="3" fill="#f4f4f4" stroke="#aaa"/><path d="M-5.500.5h11" stroke="#aaa"/><path d="M-3.500-2.500L0-6l3.500 3.500zM-3.500 4L0 7.500 3.500 4z" fill="#777"/>`)}<div class="sw"><div></div></div></div>`)}
          ${this.opt(true, "Page View", 54, "")}
          ${this.opt(false, "Background", 63, html`<div class="ctl"><div class="change">${lab("Change", 42, 12.500, "arial")}</div></div>`)}
          ${this.opt(false, "Shadow", 42)}
        </div>
        <div class="sec opts">
          <h4>${lab("Options", 45, 12.500, "sb")}</h4>
          ${this.opt(true, "Connection Arrows", 101)}${this.opt(true, "Connection Points", 96)}${this.opt(true, "Guides", 36.500)}${this.opt(true, "Autosave", 48.500)}
        </div>
        <div class="sec paper">
          <h4>${lab("Paper Size", 58, 12.500, "sb")}</h4>
          <div class="select">${lab("A4 (210 mm x 297 mm)", 126, 12.500, "arial")}${ic(12, 10, svg`<path d="M-4-2L0 2l4-4" fill="none" stroke="#111" stroke-width="2"/>`)}</div>
          <div class="opt">${ic(14, 14, svg`<circle r="6" fill="#fff" stroke="#0b75f5" stroke-width="1.300"/><circle r="3.800" fill="#0b75f5"/>`)}${lab("Portrait", 39, 12.500)}<span class="land">${ic(14, 14, svg`<circle r="6" fill="#fff" stroke="#777"/>`)}</span>${lab("Landscape", 55.500, 12.500)}</div>
        </div>
        <div class="sec btns"><div class="btn">${lab("Edit Data...", 59, 12.500, "arial")}</div><div class="btn">${lab("Clear Default Style", 100, 12.500, "arial")}</div></div>
      </div>`;
  }

  private player() {
    return html`
      <div class="vtitle">${lab("0. Full-stack Army - Welcome | Decision-Making Video | Complete MERN Stack Journey in Bangla", 1153, 25.800)}</div>
      <div class="vtop">
        ${ic(32, 32, svg`<circle r="15" fill="#eee"/><path d="M-1.500-9v10l7.500 5" fill="none" stroke="#222" stroke-width="3"/>`)}
        ${ic(32, 26, svg`<path d="M3-12L16 0 3 11V4C-6 4-12 7-15.500 13-14 3-8-4 3-5.500z" fill="#eee"/>`)}
      </div>
      <div class="track"><div class="played"></div><div class="loaded"></div></div>
      <div class="ctrls">
        ${ic(22, 24, svg`<path d="M-10-12L10 0-10 12z" fill="#eee"/>`)}
        <span class="n">${ic(18, 18, svg`<path d="M-9-9L4 0-9 9zM6-9h3V9H6z" fill="#eee"/>`)}</span>
        <span class="m">${ic(24, 22, svg`<path d="M-11-4h5l6-6v20l-6-6h-5z" fill="#eee"/><path d="M3-4.500q4 4.500 0 9M3-9q12 3 6 14" fill="none" stroke="#eee" stroke-width="2.200"/><path d="M-9-10L10 9" stroke="#14161c" stroke-width="4"/><path d="M-10.500-9.500L9 10" stroke="#eee" stroke-width="2.300"/>`)}</span>
        <span class="t">${lab("1:36:56 / 3:51:11", 150, 19)}</span>
      </div>
      <div class="chev">${ic(16, 12, svg`<path d="M-5-3L0 3l5-6" fill="none" stroke="#eee" stroke-width="2.500"/>`)}</div>
      <div class="tray">
        <svg width="240" height="47" viewBox="1680 1032 240 47">
          <g fill="none" stroke="#777b7e" stroke-width="1.400">
            <path d="M1716 1058l4-5 4 5"/>
            <rect x="1743" y="1048" width="5" height="9" rx="2.500" stroke="#47706a"/><path d="M1741 1054q0 6 5 6t5-6M1746 1060v3" stroke="#47706a"/>
            <path d="M1771 1054q8-8 16 0M1774 1057q5-5 10 0M1777 1060q2-2 4 0"/>
            <path d="M1794 1053h3l4-4v13l-4-4h-3zM1803 1053l6 6M1809 1053l-6 6"/>
            <path d="M1895 1049q7 4 3 10-4 5-10 1 9-1 7-11z"/>
          </g>
          <text x="1837" y="1053" font-size="12" textLength="39" lengthAdjust="spacingAndGlyphs" fill="#8b8d90">1:31 PM</text>
          <text x="1825" y="1068.500" font-size="12" textLength="51" lengthAdjust="spacingAndGlyphs" fill="#8b8d90">1/15/2022</text>
          <rect x="1684" y="1047" width="30" height="12" rx="6" fill="#77787b"/><circle cx="1708.500" cy="1053" r="9" fill="#eee"/><path d="M1706 1048.500l6 4.500-6 4.500z" fill="#111"/>
          <rect x="1749" y="1043" width="25" height="20" rx="2.500" fill="#eee"/>
          <path d="M1759.500 1050.500h-5v5.500h5M1769.500 1050.500h-5v5.500h5" fill="none" stroke="#15161a" stroke-width="2.200"/>
          <circle cx="1815" cy="1053" r="6" fill="none" stroke="#eee" stroke-width="5"/><circle cx="1815" cy="1053" r="9.300" fill="none" stroke="#eee" stroke-width="3.400" stroke-dasharray="4.300 5.440" stroke-dashoffset="2.150"/>
          <rect x="1815" y="1041" width="21" height="16" rx="1.500" fill="#e30b0b"/><text x="1817.500" y="1053.500" font-family="Roboto" font-weight="700" font-size="11.500" textLength="16" lengthAdjust="spacingAndGlyphs" fill="#fff">HD</text>
          <path d="M1858 1050h7v-8M1880 1050h-7v-8M1858 1056.500h7v8M1880 1056.500h-7v8" fill="none" stroke="#eee" stroke-width="3"/>
        </svg>
      </div>`;
  }

  render() {
    return html`
      <div class="page">
        ${this.chrome()}${this.header()}
        <div class="body">
          ${this.sidebar()}
          <div class="split">${ic(6, 8, svg`<path d="M-1.500-3V3M1.500-3V3" stroke="#555"/>`)}</div>
          <div class="main">
            <svg class="canvas" width="1454" height="775" viewBox="226 205 1454 775">${diagram}</svg>
            <div class="hbar"><div></div></div>
            <div class="foot">
              <div class="dots">${ic(10, 18, svg`<path d="M0-6.500v3M0-1.500v3M0 3.500v3" stroke="#666" stroke-width="3"/>`)}</div>
              <div class="pg">${lab("Page-1", 41.500, 12.500, "b")}</div>
              <div class="add">${ic(16, 16, svg`<path d="M-6.500 0h13M0-6.500v13" stroke="#777" stroke-width="2.500"/>`)}</div>
            </div>
          </div>
          ${this.panel()}
        </div>
        <div class="task">${apps.map((a, i) => html`<div class="app ${i > 12 ? "run" : i === 12 ? "cur" : ""}">${ic(26, 26, a)}</div>`)}</div>
      </div>
      <div class="shade"></div>
      ${this.player()}`;
  }
}
